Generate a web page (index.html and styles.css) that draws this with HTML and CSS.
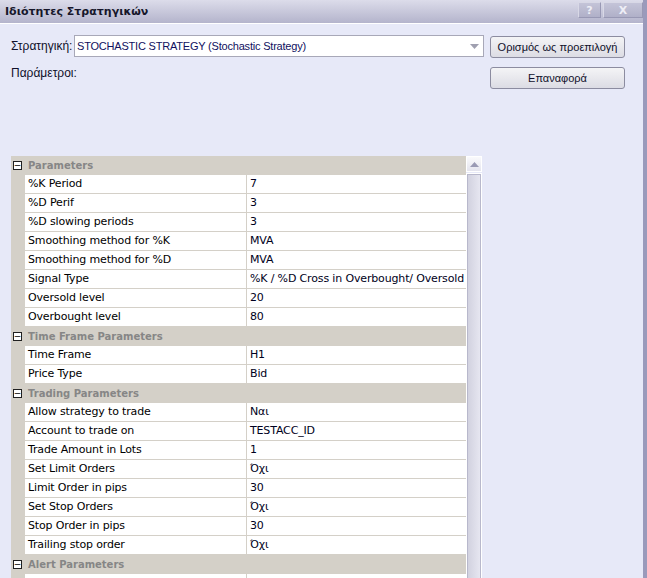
FILE: index.html
```html
<!DOCTYPE html>
<html>
    <head>
        <title>Ιδιότητες Στρατηγικών</title>
        <link rel="stylesheet" href="styles.css">
    </head>
    <body>
        <div class="window">
            <div class="titlebar">
                <span class="title">Ιδιότητες Στρατηγικών</span>
                <div class="title-buttons">
                    <span class="tbtn help">?</span>
                    <span class="tbtn close">X</span>
                </div>
            </div>

            <div class="content">
                <div class="top">
                    <div class="left">
                        <div class="strategy-row">
                            <label>Στρατηγική:</label>
                            <div class="combo">
                                <span class="combo-text">STOCHASTIC STRATEGY (Stochastic Strategy)</span>
                                <span class="combo-arrow">
                                    <svg width="9" height="5" viewBox="0 0 9 5"><path d="M0 0 H9 L4.5 5 Z" fill="#a0a0b0"/></svg>
                                </span>
                            </div>
                        </div>
                        <div class="params-label">Παράμετροι:</div>
                    </div>
                    <div class="right">
                        <button type="button" class="btn">Ορισμός ως προεπιλογή</button>
                        <button type="button" class="btn">Επαναφορά</button>
                    </div>
                </div>

                <div class="grid-wrap">
                    <div class="grid">
                        <div class="group"><span class="box">−</span><span class="group-name">Parameters</span></div>
                        <div class="row"><span class="gut"></span><span class="name">%K Period</span><span class="val">7</span></div>
                        <div class="row"><span class="gut"></span><span class="name">%D Perif</span><span class="val">3</span></div>
                        <div class="row"><span class="gut"></span><span class="name">%D slowing periods</span><span class="val">3</span></div>
                        <div class="row"><span class="gut"></span><span class="name">Smoothing method for %K</span><span class="val">MVA</span></div>
                        <div class="row"><span class="gut"></span><span class="name">Smoothing method for %D</span><span class="val">MVA</span></div>
                        <div class="row"><span class="gut"></span><span class="name">Signal Type</span><span class="val">%K / %D Cross in Overbought/ Oversold</span></div>
                        <div class="row"><span class="gut"></span><span class="name">Oversold level</span><span class="val">20</span></div>
                        <div class="row"><span class="gut"></span><span class="name">Overbought level</span><span class="val">80</span></div>

                        <div class="group"><span class="box">−</span><span class="group-name">Time Frame Parameters</span></div>
                        <div class="row"><span class="gut"></span><span class="name">Time Frame</span><span class="val">H1</span></div>
                        <div class="row"><span class="gut"></span><span class="name">Price Type</span><span class="val">Bid</span></div>

                        <div class="group"><span class="box">−</span><span class="group-name">Trading Parameters</span></div>
                        <div class="row"><span class="gut"></span><span class="name">Allow strategy to trade</span><span class="val">Ναι</span></div>
                        <div class="row"><span class="gut"></span><span class="name">Account to trade on</span><span class="val">TESTACC_ID</span></div>
                        <div class="row"><span class="gut"></span><span class="name">Trade Amount in Lots</span><span class="val">1</span></div>
                        <div class="row"><span class="gut"></span><span class="name">Set Limit Orders</span><span class="val">Όχι</span></div>
                        <div class="row"><span class="gut"></span><span class="name">Limit Order in pips</span><span class="val">30</span></div>
                        <div class="row"><span class="gut"></span><span class="name">Set Stop Orders</span><span class="val">Όχι</span></div>
                        <div class="row"><span class="gut"></span><span class="name">Stop Order in pips</span><span class="val">30</span></div>
                        <div class="row"><span class="gut"></span><span class="name">Trailing stop order</span><span class="val">Όχι</span></div>

                        <div class="group"><span class="box">−</span><span class="group-name">Alert Parameters</span></div>
                        <div class="row"><span class="gut"></span><span class="name"></span><span class="val"></span></div>
                    </div>
                    <div class="scrollbar">
                        <div class="sb-up">
                            <svg width="9" height="5" viewBox="0 0 9 5"><path d="M4.5 0 L9 5 H0 Z" fill="#9a9ab4"/></svg>
                        </div>
                        <div class="sb-thumb"></div>
                    </div>
                </div>
            </div>
        </div>
    </body>
</html>
```

FILE: styles.css
```css
body {
    margin: 0;
    padding: 0;
    overflow: hidden;
    font-family: "DejaVu Sans", Tahoma, sans-serif;
    background-color: #e7e9f8;
}

.window {
    height: 578px;
    border-right: 4px solid #9a9abb;
    background-color: #e7e9f8;
    overflow: hidden;
}

.titlebar {
    height: 23px;
    display: flex;
    align-items: center;
    justify-content: space-between;
    background: linear-gradient(#dcdcea, #b4b4cc);
    border-bottom: 1px solid #ffffff;
}

.title {
    padding-left: 5px;
    font-weight: bold;
    font-size: 11px;
    color: #16162a;
}

.title-buttons {
    display: flex;
    gap: 2px;
    align-self: flex-start;
    padding-top: 2px;
}

.tbtn {
    height: 14px;
    display: flex;
    align-items: center;
    justify-content: center;
    background: linear-gradient(#c4c4d8, #b0b0c8);
    border-top: 1px solid #d8d8e6;
    border-left: 1px solid #d8d8e6;
    border-right: 1px solid #9898b4;
    border-bottom: 1px solid #9898b4;
    color: #eeeef6;
    font-weight: bold;
    font-size: 11px;
}

.help {
    width: 21px;
}

.close {
    width: 38px;
}

.content {
    padding: 11px 0 0 11px;
}

.top {
    display: flex;
    height: 121px;
}

.left {
    width: 473px;
    display: flex;
    flex-direction: column;
}

.strategy-row {
    display: flex;
    align-items: center;
}

.strategy-row label,
.params-label {
    font-family: "Liberation Sans", Arial, sans-serif;
    font-size: 12px;
    color: #10102a;
}

.strategy-row label {
    width: 63px;
}

.combo {
    width: 408px;
    height: 20px;
    display: flex;
    align-items: center;
    justify-content: space-between;
    background-color: #ffffff;
    border: 1px solid #a8a8b8;
}

.combo-text {
    padding-left: 2px;
    font-family: "Liberation Sans", Arial, sans-serif;
    font-size: 11px;
    letter-spacing: -0.2px;
    color: #101060;
}

.combo-arrow {
    width: 17px;
    display: flex;
    justify-content: center;
}

.params-label {
    margin-top: 9px;
}

.right {
    display: flex;
    flex-direction: column;
    gap: 9px;
    padding-left: 6px;
    padding-top: 1px;
}

.btn {
    width: 135px;
    height: 22px;
    padding: 0;
    border: 1px solid #8c8ca0;
    border-radius: 3px;
    background: linear-gradient(#f4f4f6, #dcdce4);
    font-family: "Liberation Sans", Arial, sans-serif;
    font-size: 11px;
    color: #10102a;
}

.grid-wrap {
    display: flex;
    width: 471px;
}

.grid {
    width: 455px;
    display: flex;
    flex-direction: column;
}

.group {
    height: 19px;
    display: flex;
    align-items: center;
    background-color: #d4d0c8;
}

.box {
    width: 9px;
    height: 9px;
    margin-left: 2px;
    margin-right: 6px;
    border: 1px solid #202020;
    box-sizing: border-box;
    display: flex;
    align-items: center;
    justify-content: center;
    font-size: 9px;
    line-height: 9px;
    background-color: #ffffff;
    color: #000000;
}

.group-name {
    font-weight: bold;
    font-size: 10px;
    color: #868686;
}

.row {
    height: 19px;
    display: grid;
    grid-template-columns: 14px 222px 1fr;
}

.gut {
    background-color: #d4d0c8;
}

.name,
.val {
    background-color: #ffffff;
    border-bottom: 1px solid #d4d0c8;
    font-size: 11px;
    line-height: 18px;
    letter-spacing: -0.15px;
    color: #000000;
    white-space: nowrap;
    overflow: hidden;
}

.name {
    padding-left: 3px;
    border-right: 1px solid #d4d0c8;
}

.val {
    padding-left: 3px;
    color: #000020;
}

.scrollbar {
    width: 16px;
    display: flex;
    flex-direction: column;
    gap: 1px;
}

.sb-up {
    height: 16px;
    display: flex;
    align-items: center;
    justify-content: center;
    background: linear-gradient(#fafafc, #e4e4ee);
    border: 1px solid #ffffff;
    box-sizing: border-box;
}

.sb-thumb {
    flex: 1;
    border: 1px solid #ffffff;
    outline: 1px solid #b8b8cc;
    outline-offset: -2px;
    background: linear-gradient(90deg, #d0d0de, #e8e8f2);
}
```
